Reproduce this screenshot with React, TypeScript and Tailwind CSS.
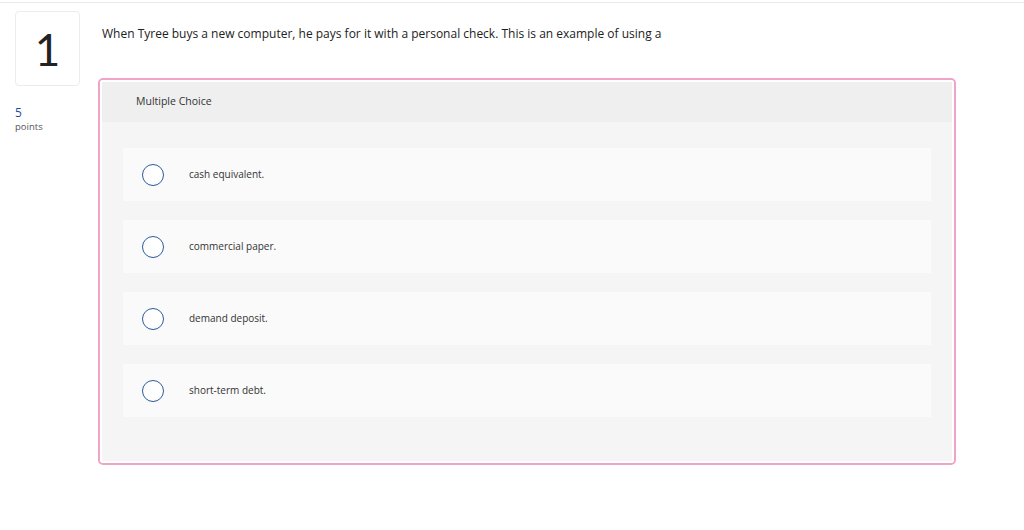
const options = ['cash equivalent.', 'commercial paper.', 'demand deposit.', 'short-term debt.'];

export default function App() {
  return (
    <div className="w-[1024px] h-[530px] bg-white font-['Open_Sans',sans-serif] text-[#333]">
      <div className="h-[3px] border-b border-[#ececec]" />
      <div className="flex pt-[8px]">
        <div className="w-[98px] shrink-0 pl-[15px]">
          <div className="w-[65px] h-[75px] border border-[#ececec] rounded-[4px] flex items-center justify-center text-[44px] leading-none text-[#222] font-['Lato',sans-serif]">
            1
          </div>
          <div className="mt-[20px] text-[12px] leading-[14px] text-[#1f4f91]">5</div>
          <div className="mt-[1px] text-[9.5px] leading-[12px] text-[#555]">points</div>
        </div>
        <div className="w-[858px]">
          <p className="pl-[4px] pt-[15px] text-[12px] leading-[16px] text-[#222]">
            When Tyree buys a new computer, he pays for it with a personal check. This is an example of using a
          </p>
          <div className="mt-[36px] border-2 border-[#f0a4c8] rounded-[5px] overflow-hidden">
            <div className="border-2 border-white rounded-[3px] bg-[#f5f5f5] h-[383px]">
              <div className="h-[40px] bg-[#efefef] flex items-center pl-[34px] text-[10.5px] text-[#333]">
                Multiple Choice
              </div>
              <div className="px-[21px] pt-[26px] flex flex-col gap-[19px]">
                {options.map((o) => (
                  <div key={o} className="h-[53px] bg-[#fafafa] flex items-center pl-[19px]">
                    <span className="w-[22px] h-[22px] rounded-full border border-[#2c5b9a] bg-white shrink-0" />
                    <span className="ml-[25px] text-[10px] text-[#333]">{o}</span>
                  </div>
                ))}
              </div>
            </div>
          </div>
        </div>
      </div>
    </div>
  );
}
